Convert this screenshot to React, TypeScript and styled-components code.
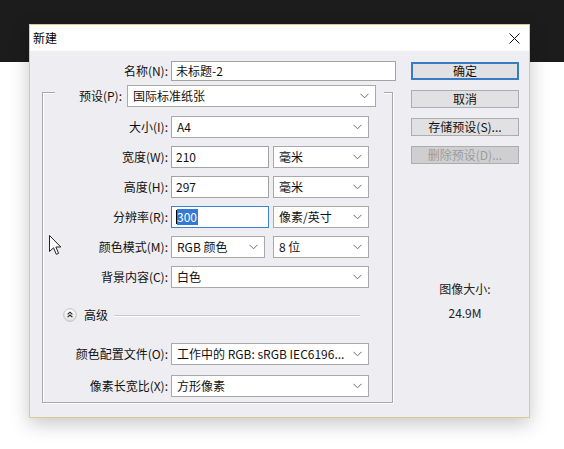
import React from 'react';
import styled, { createGlobalStyle } from 'styled-components';

const GlobalStyle = createGlobalStyle`
  html, body {
    margin: 0;
    padding: 0;
  }
  body {
    background: linear-gradient(#1c1c1c 0, #1c1c1c 62px, #ffffff 62px);
    min-height: 449px;
    font-family: "Noto Sans CJK SC", "Noto Sans", sans-serif;
    font-size: 12px;
    color: #111;
  }
`

const Stage = styled.div`
  position: relative;
  height: 449px;
  box-sizing: border-box;
  padding: 24px 0 0 29px;
`

const Dialog = styled.div`
  width: 501px;
  height: 394px;
  box-sizing: border-box;
  border: 1px solid #dcc98f;
  background: #eeeef2;
  box-shadow: 0 6px 18px rgba(0, 0, 0, 0.22);
  display: flex;
  flex-direction: column;
`

const TitleBar = styled.div`
  height: 26px;
  background: #fff;
  display: flex;
  align-items: center;
  justify-content: space-between;
  padding: 0 9px 0 3px;
`

const Title = styled.span`
  font-size: 12px;
  line-height: 16px;
  color: #000;
`

const Body = styled.div`
  display: flex;
  padding: 10px 0 0 12px;
  gap: 15px;
`

const LeftCol = styled.div`
  width: 354px;
  display: flex;
  flex-direction: column;
`

const Row = styled.div`
  display: flex;
  align-items: center;
  height: 22px;
`

const NameRow = styled(Row)`
  height: 20px;
`

const Label = styled.div<{ $w: number }>`
  width: ${(p) => p.$w}px;
  flex: none;
  text-align: right;
  margin-right: 3px;
  line-height: 16px;
  white-space: nowrap;
  color: #111;
`

const TextInput = styled.div<{ $w: number; $focused?: boolean; $h?: number }>`
  width: ${(p) => p.$w}px;
  height: ${(p) => p.$h || 22}px;
  flex: none;
  box-sizing: border-box;
  background: #fff;
  border: 1px solid ${(p) => (p.$focused ? '#3c83d4' : '#a3a3a3')};
  display: flex;
  align-items: center;
  padding-left: 4px;
  line-height: 16px;
  white-space: nowrap;
`

const Select = styled.div<{ $w: number; $gap?: number }>`
  width: ${(p) => p.$w}px;
  height: 22px;
  flex: none;
  box-sizing: border-box;
  background: #fff;
  border: 1px solid #a9a9a9;
  margin-left: ${(p) => p.$gap || 0}px;
  display: flex;
  align-items: center;
  justify-content: space-between;
  padding: 0 6px 0 5px;
  line-height: 16px;
  white-space: nowrap;
  overflow: hidden;
`

const Selected = styled.span`
  background: #3479d3;
  color: #fff;
  padding-right: 1px;
`

const Caret = styled.span`
  display: inline-block;
  width: 1px;
  height: 14px;
  background: #000;
`

const Group = styled.div`
  width: 351px;
  box-sizing: border-box;
  margin-top: 11px;
  border: 1px solid #a8a8a8;
  border-top: none;
  box-shadow: inset 1px 0 0 #fff, 1px 1px 0 #fff;
  padding-bottom: 5px;
`

const GroupHead = styled.div`
  display: flex;
  align-items: flex-start;
  height: 22px;
  margin-top: -7px;
`

const EdgeLine = styled.div<{ $w?: number }>`
  ${(p) => (p.$w ? `width: ${p.$w}px; flex: none;` : 'flex: 1;')}
  height: 1px;
  margin-top: 7px;
  background: #a8a8a8;
  box-shadow: 0 1px 0 #fff;
`

const HeadLabel = styled(Label)`
  line-height: 22px;
  padding-right: 2px;
  box-sizing: border-box;
`

const Rows = styled.div`
  display: flex;
  flex-direction: column;
  gap: 8px;
  margin-top: 9px;
`

const Advanced = styled.div`
  display: flex;
  align-items: center;
  height: 18px;
  margin: 18px 32px 0 20px;
  gap: 7px;
`

const AdvText = styled.span`
  line-height: 16px;
  margin-right: -1px;
`

const Rule = styled.div`
  flex: 1;
  height: 1px;
  background: #c9c9c9;
  box-shadow: 0 1px 0 #fff;
`

const ProfileRows = styled.div`
  display: flex;
  flex-direction: column;
  gap: 10px;
  margin-top: 19px;
`

const RightCol = styled.div`
  width: 108px;
  display: flex;
  flex-direction: column;
  padding-top: 1px;
`

const Buttons = styled.div`
  display: flex;
  flex-direction: column;
  gap: 10px;
`

const Button = styled.div<{ $primary?: boolean; $disabled?: boolean }>`
  height: 18px;
  box-sizing: border-box;
  display: flex;
  align-items: center;
  justify-content: center;
  background: ${(p) => (p.$disabled ? '#cfcfd1' : '#e1e1e3')};
  border: ${(p) => (p.$primary ? '2px solid #3a7cc4' : '1px solid #adadad')};
  color: ${(p) => (p.$disabled ? '#9c9c9c' : '#111')};
  line-height: 16px;
  white-space: nowrap;
`

const SizeInfo = styled.div`
  margin-top: 117px;
  display: flex;
  flex-direction: column;
  align-items: center;
  gap: 8px;
  line-height: 16px;
  color: #222;
`

const Pointer = styled.svg`
  position: absolute;
  left: 49px;
  top: 235px;
`

const Chevron = () => (
  <svg width="9" height="6" viewBox="0 0 9 6">
    <polyline points="0.5,0.8 4.5,4.8 8.5,0.8" fill="none" stroke="#6b6b6b" strokeWidth="1" />
  </svg>
);

const Dropdown = ({ w, gap, children }: { w: number; gap?: number; children: React.ReactNode }) => (
  <Select $w={w} $gap={gap}>
    <span>{children}</span>
    <Chevron />
  </Select>
);

const CollapseIcon = () => (
  <svg width="14" height="14" viewBox="0 0 14 14">
    <defs>
      <linearGradient id="adv" x1="0" y1="0" x2="0" y2="1">
        <stop offset="0" stopColor="#ffffff" />
        <stop offset="1" stopColor="#e2e2e2" />
      </linearGradient>
    </defs>
    <circle cx="7" cy="7" r="6.3" fill="url(#adv)" stroke="#b9b9b9" strokeWidth="0.9" />
    <polyline points="4.6,6.4 7,4.2 9.4,6.4" fill="none" stroke="#222" strokeWidth="1.1" />
    <polyline points="4.6,9.2 7,7 9.4,9.2" fill="none" stroke="#222" strokeWidth="1.1" />
  </svg>
);

const App = () => {
  return (
    <Stage>
      <GlobalStyle />
      <Dialog>
        <TitleBar>
          <Title>新建</Title>
          <svg width="11" height="11" viewBox="0 0 11 11">
            <path d="M0.5 0.5 L10.5 10.5 M10.5 0.5 L0.5 10.5" stroke="#111" strokeWidth="1" />
          </svg>
        </TitleBar>
        <Body>
          <LeftCol>
            <NameRow>
              <Label $w={126}>名称(N):</Label>
              <TextInput $w={225} $h={20}>未标题-2</TextInput>
            </NameRow>
            <Group>
              <GroupHead>
                <EdgeLine $w={12} />
                <HeadLabel $w={69}>预设(P):</HeadLabel>
                <Dropdown w={249}>国际标准纸张</Dropdown>
                <div style={{ width: 8 }} />
                <EdgeLine />
              </GroupHead>
              <Rows>
                <Row>
                  <Label $w={125}>大小(I):</Label>
                  <Dropdown w={198}>A4</Dropdown>
                </Row>
                <Row>
                  <Label $w={125}>宽度(W):</Label>
                  <TextInput $w={98}>210</TextInput>
                  <Dropdown w={96} gap={4}>毫米</Dropdown>
                </Row>
                <Row>
                  <Label $w={125}>高度(H):</Label>
                  <TextInput $w={98}>297</TextInput>
                  <Dropdown w={96} gap={4}>毫米</Dropdown>
                </Row>
                <Row>
                  <Label $w={125}>分辨率(R):</Label>
                  <TextInput $w={98} $focused>
                    <Caret />
                    <Selected>300</Selected>
                  </TextInput>
                  <Dropdown w={96} gap={4}>像素/英寸</Dropdown>
                </Row>
                <Row>
                  <Label $w={125}>颜色模式(M):</Label>
                  <Dropdown w={94}>RGB 颜色</Dropdown>
                  <Dropdown w={96} gap={8}>8 位</Dropdown>
                </Row>
                <Row>
                  <Label $w={125}>背景内容(C):</Label>
                  <Dropdown w={198}>白色</Dropdown>
                </Row>
              </Rows>
              <Advanced>
                <CollapseIcon />
                <AdvText>高级</AdvText>
                <Rule />
              </Advanced>
              <ProfileRows>
                <Row>
                  <Label $w={125}>颜色配置文件(O):</Label>
                  <Dropdown w={198}>工作中的 RGB: sRGB IEC6196...</Dropdown>
                </Row>
                <Row>
                  <Label $w={125}>像素长宽比(X):</Label>
                  <Dropdown w={198}>方形像素</Dropdown>
                </Row>
              </ProfileRows>
            </Group>
          </LeftCol>
          <RightCol>
            <Buttons>
              <Button $primary>确定</Button>
              <Button>取消</Button>
              <Button>存储预设(S)...</Button>
              <Button $disabled>删除预设(D)...</Button>
            </Buttons>
            <SizeInfo>
              <span>图像大小:</span>
              <span>24.9M</span>
            </SizeInfo>
          </RightCol>
        </Body>
      </Dialog>
      <Pointer width="13" height="21" viewBox="0 0 13 21">
        <path d="M0.5 0.5 L0.5 16.5 L4.5 12.8 L7.3 19.3 L9.6 18.3 L6.9 12 L11.8 12 Z" fill="#fff" stroke="#222" strokeWidth="1" />
      </Pointer>
    </Stage>
  );
};

export default App;
